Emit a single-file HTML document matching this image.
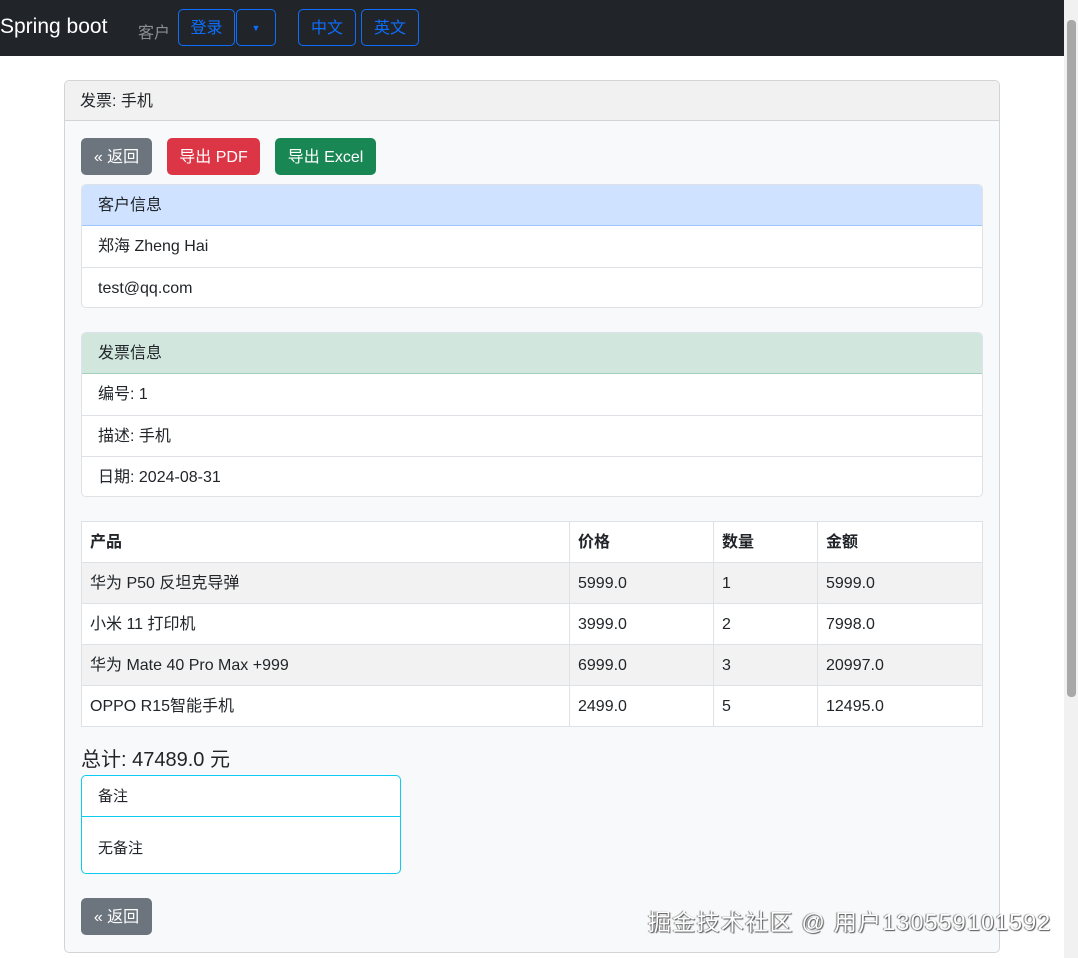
<!DOCTYPE html>
<html><head><meta charset="utf-8"><style>
*{box-sizing:border-box;margin:0;padding:0}
body{width:1078px;height:958px;overflow:hidden;background:#fff;font-family:"Liberation Sans","Noto Sans CJK SC",sans-serif;font-size:16px;color:#212529;position:relative}
.a{position:absolute}
.nav{left:0;top:0;width:1064px;height:56px;background:#212529}
.ob{border:1px solid #0d6efd;border-radius:5px;color:#0d6efd;font-size:16px;text-align:center;line-height:37px;height:37px}
.btn{color:#fff;border-radius:5px;line-height:39px;height:37px;text-align:center;font-size:16px}
.row{border-top:1px solid #dee2e6;height:41px;line-height:42px;padding-left:16px}
.card{border:1px solid #dee2e6;border-radius:5px;background:#fff;overflow:hidden}
table{border-collapse:collapse;position:absolute;left:81px;top:521px;width:902px;background:#fff}
td,th{border:1px solid #dee2e6;height:41px;padding:2px 8px 0;text-align:left;font-size:16px;vertical-align:middle;line-height:20px}
tr.s td{background:#f2f2f2}
</style></head><body>
<div class="a nav"></div>
<div class="a" style="left:0;top:15px;color:#fff;font-size:21px">Spring boot</div>
<div class="a" style="left:138px;top:19px;color:#8c8f92;font-size:16px">客户</div>
<div class="a ob" style="left:178px;top:9px;width:57px">登录</div>
<div class="a ob" style="left:236px;top:9px;width:40px;font-size:9px">▼</div>
<div class="a ob" style="left:298px;top:9px;width:58px">中文</div>
<div class="a ob" style="left:361px;top:9px;width:58px">英文</div>
<div class="a" style="left:1064px;top:0;width:14px;height:958px;background:#f1f1f1"></div>
<div class="a" style="left:1067px;top:20px;width:9px;height:677px;background:#a8a8a8;border-radius:4px"></div>

<div class="a" style="left:64px;top:80px;width:936px;height:873px;border:1px solid #d4d4d4;border-radius:5px;background:#f8f9fa"></div>
<div class="a" style="left:65px;top:81px;width:934px;height:40px;background:#f1f1f1;border-bottom:1px solid #d4d4d4;padding-left:15px;line-height:42px;border-radius:5px 5px 0 0">发票: 手机</div>
<div class="a btn" style="left:81px;top:138px;width:71px;background:#6c757d">« 返回</div>
<div class="a btn" style="left:167px;top:138px;width:93px;background:#dc3545">导出 PDF</div>
<div class="a btn" style="left:275px;top:138px;width:101px;background:#198754">导出 Excel</div>

<div class="a card" style="left:81px;top:184px;width:902px;height:124px">
<div style="background:#cfe2ff;height:41px;line-height:42px;padding-left:16px;border-bottom:1px solid #9ec5fe">客户信息</div>
<div style="height:41px;line-height:42px;padding-left:16px">郑海 Zheng Hai</div>
<div class="row">test@qq.com</div></div>

<div class="a card" style="left:81px;top:332px;width:902px;height:165px">
<div style="background:#d1e7dd;height:41px;line-height:42px;padding-left:16px;border-bottom:1px solid #a3cfbb">发票信息</div>
<div style="height:41px;line-height:42px;padding-left:16px">编号: 1</div>
<div class="row">描述: 手机</div>
<div class="row">日期: 2024-08-31</div></div>

<table>
<tr><th style="width:488px">产品</th><th style="width:144px">价格</th><th style="width:104px">数量</th><th>金额</th></tr>
<tr class="s"><td>华为 P50 反坦克导弹</td><td>5999.0</td><td>1</td><td>5999.0</td></tr>
<tr><td>小米 11 打印机</td><td>3999.0</td><td>2</td><td>7998.0</td></tr>
<tr class="s"><td>华为 Mate 40 Pro Max +999</td><td>6999.0</td><td>3</td><td>20997.0</td></tr>
<tr><td>OPPO R15智能手机</td><td>2499.0</td><td>5</td><td>12495.0</td></tr>
</table>
<div class="a" style="left:81px;top:743px;font-size:20px">总计: 47489.0 元</div>
<div class="a" style="left:81px;top:775px;width:320px;height:99px;border:1px solid #0dcaf0;border-radius:5px;background:#fff">
<div style="height:41px;line-height:42px;padding-left:16px;border-bottom:1px solid #0dcaf0;font-size:15px">备注</div>
<div style="padding:20px 16px;font-size:15px">无备注</div></div>
<div class="a btn" style="left:81px;top:898px;width:71px;background:#6c757d">« 返回</div>
<div class="a" style="left:648px;top:903px;font-size:23px;letter-spacing:1.3px;color:#fff;text-shadow:1px 1px 1px #555,-1px 0 1px #777">掘金技术社区 @ 用户130559101592</div>
</body></html>
